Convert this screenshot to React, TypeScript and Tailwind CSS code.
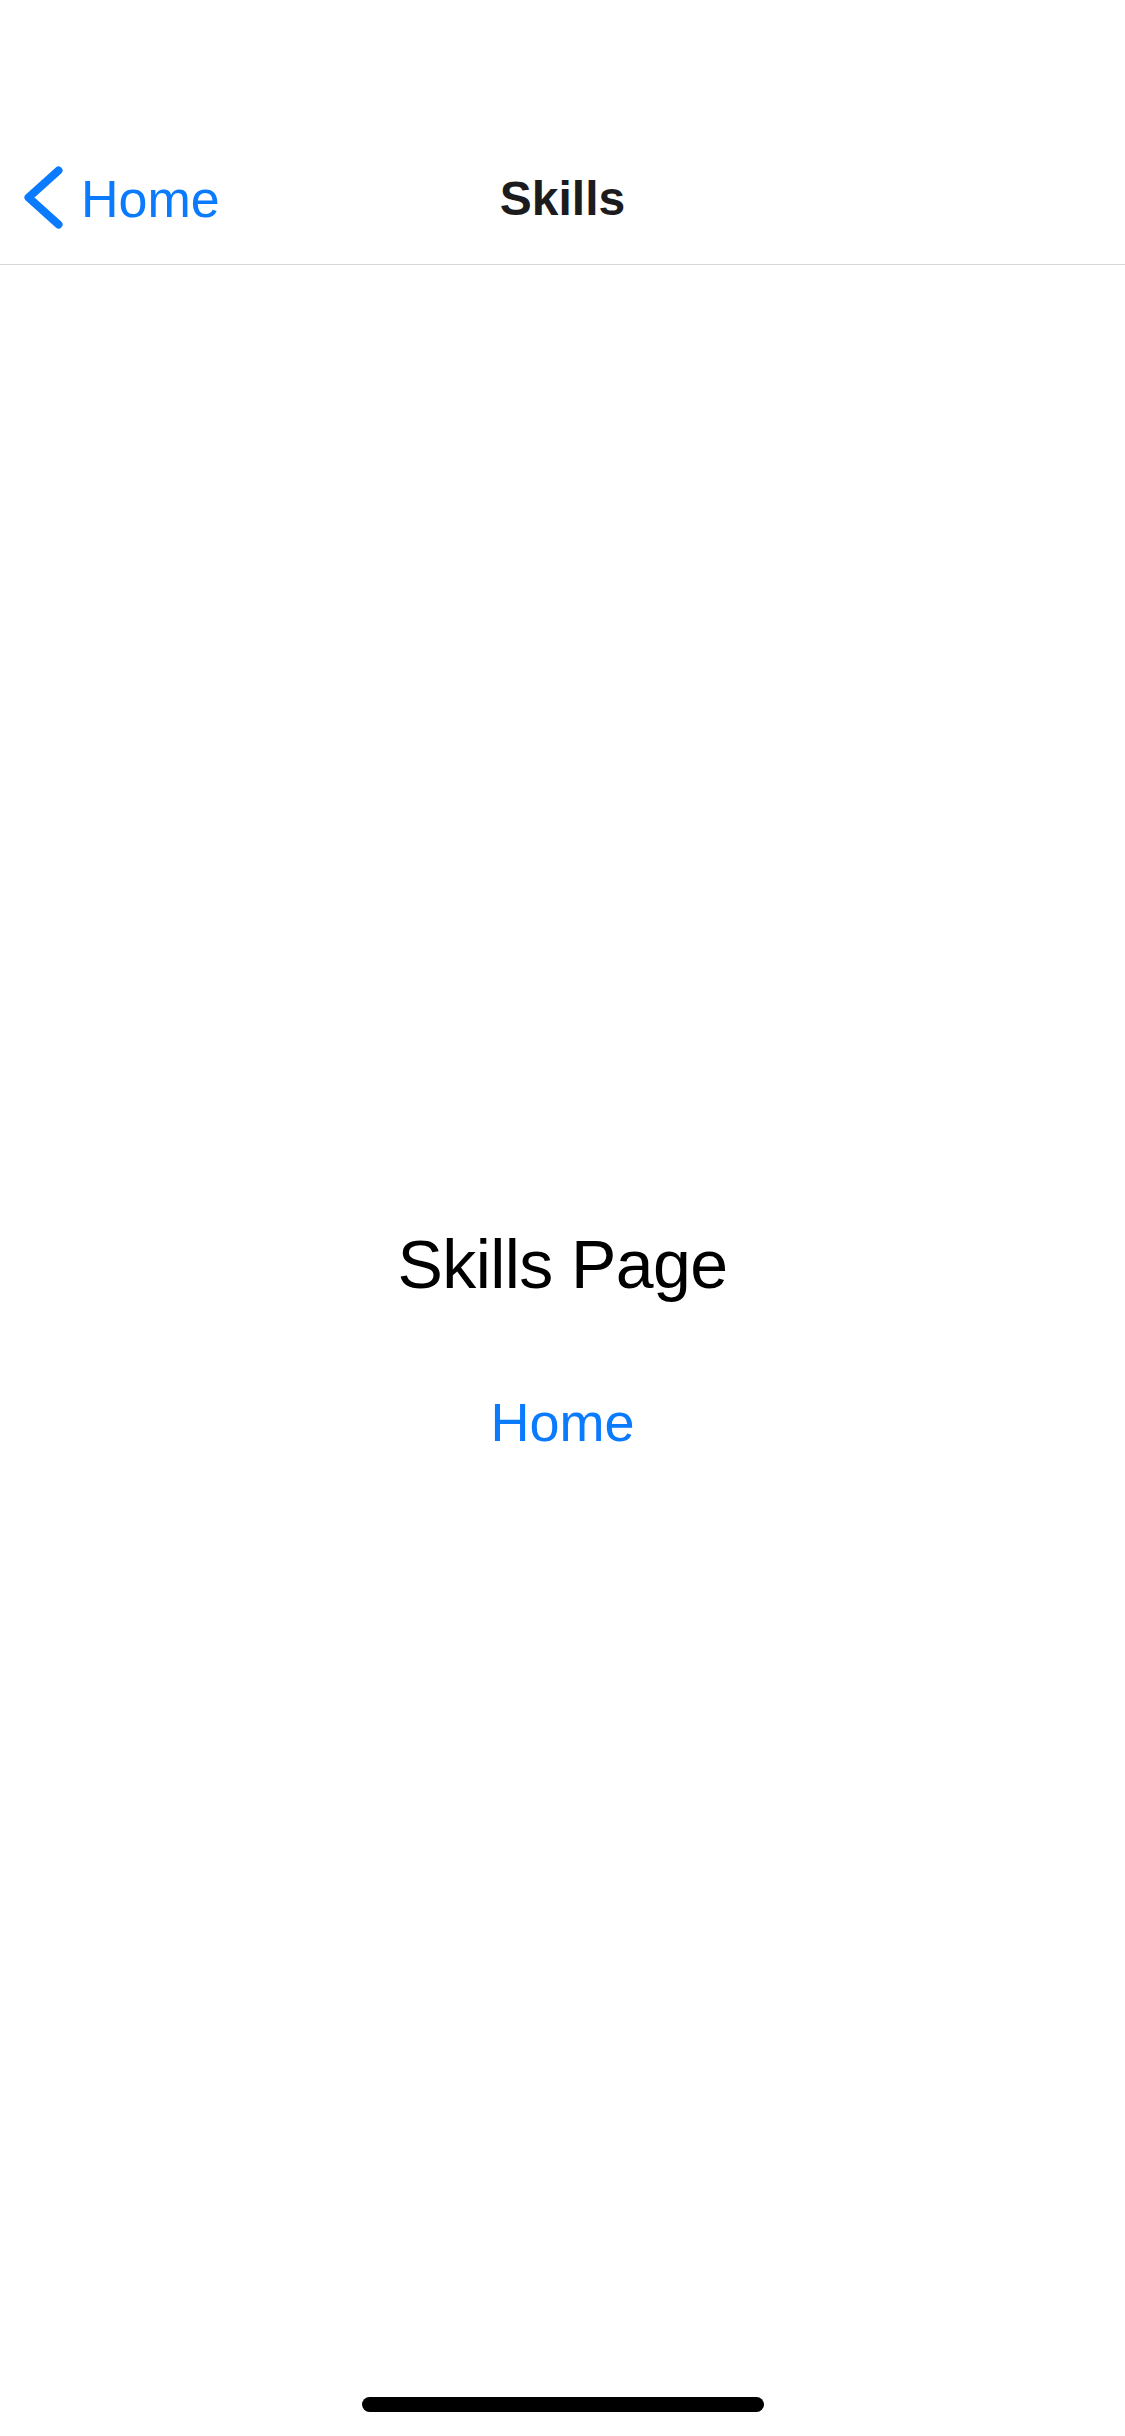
import React from "react";

export default function App() {
  return (
    <div
      className="relative flex min-h-[2436px] w-[1125px] flex-col bg-white"
      style={{ fontFamily: '"Liberation Sans", Arial, sans-serif' }}
    >
      {/* status bar space */}
      <div className="h-[132px] shrink-0 bg-white" />

      {/* nav bar */}
      <div className="grid h-[133px] shrink-0 grid-cols-[1fr_auto_1fr] items-center border-b border-[#d8d8d8] bg-white pb-px">
        <div className="flex items-center pl-[20px]">
          <svg width="45" height="70" viewBox="0 0 45 70" className="shrink-0">
            <polyline
              points="38.5,7.5 8.5,34.5 38.5,61.5"
              fill="none"
              stroke="#0A7AFF"
              strokeWidth="8"
              strokeLinecap="round"
              strokeLinejoin="round"
            />
          </svg>
          <span className="ml-[16px] mt-[2px] text-[52px] leading-[60px] text-[#0A7AFF]">Home</span>
        </div>
        <div className="mt-[2px] text-[48px] font-bold leading-[60px] text-[#1c1c1e]">Skills</div>
        <div />
      </div>

      {/* content */}
      <div className="flex flex-1 flex-col items-center justify-center pb-[25px]">
        <div className="text-[68px] leading-[80px] tracking-[-0.6px] text-black">Skills Page</div>
        <div className="mt-[88px] text-[54px] leading-[60px] text-[#0A7AFF]">Home</div>
      </div>

      {/* home indicator */}
      <div className="absolute bottom-[24px] left-[362px] h-[15px] w-[402px] rounded-full bg-black" />
    </div>
  );
}
